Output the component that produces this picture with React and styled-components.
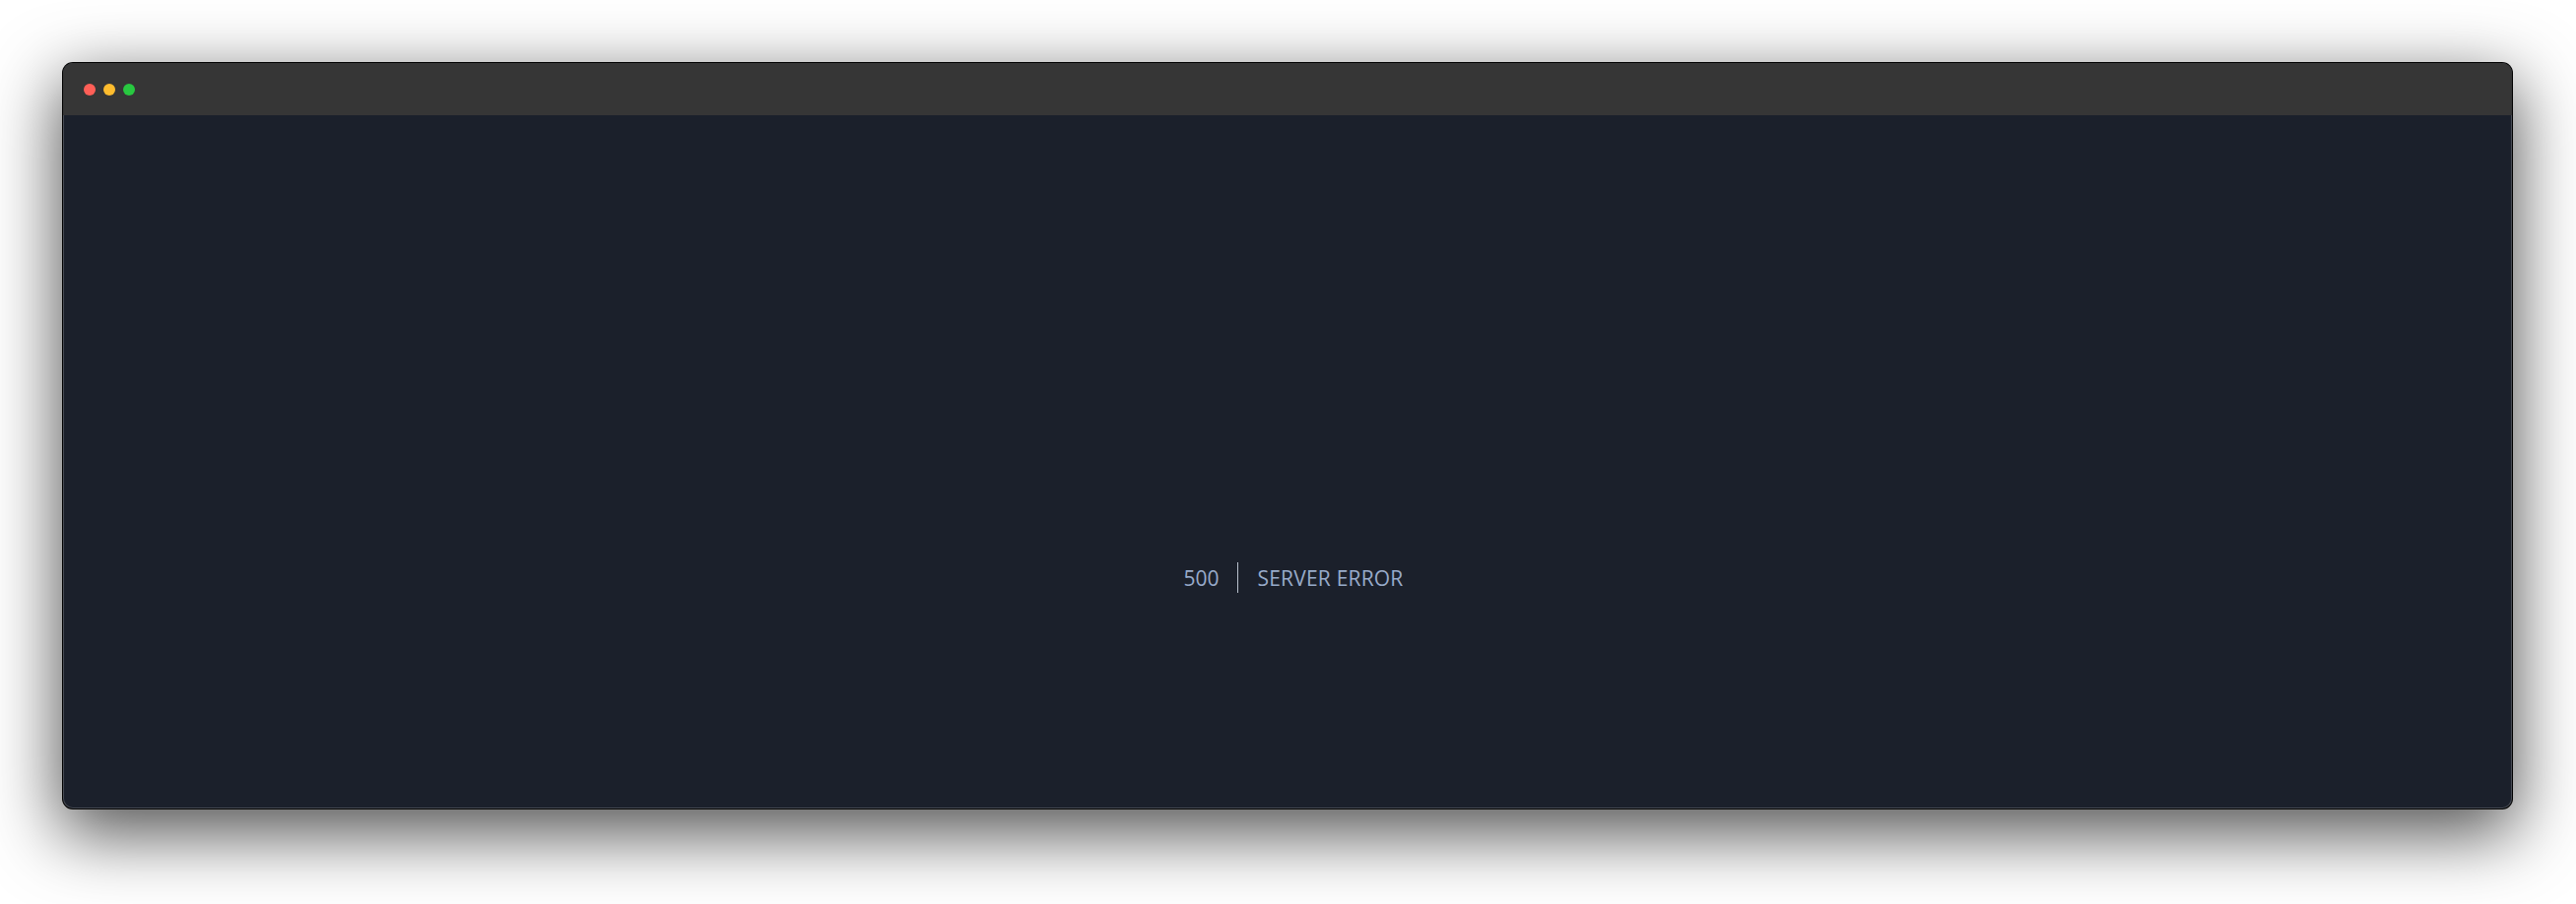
import React from "react";
import styled, { createGlobalStyle } from "styled-components";

const GlobalStyle = createGlobalStyle`
    html, body {
        margin: 0;
        padding: 0;
        background: #ffffff;
    }
`;

const Page = styled.div`
    width: 2615px;
    height: 918px;
    box-sizing: border-box;
    padding: 64px 65px 97px 64px;
    overflow: hidden;
`;

const Window = styled.div`
    height: 100%;
    display: flex;
    flex-direction: column;
    border-radius: 10px;
    overflow: hidden;
    background: #1b202b;
    box-shadow: 0 0 0 1px #000, inset 0 0 0 1px rgba(255, 255, 255, 0.2),
        0 22px 70px 4px rgba(0, 0, 0, 0.68);
`;

const TitleBar = styled.div`
    height: 53px;
    flex-shrink: 0;
    display: flex;
    align-items: center;
    gap: 8px;
    padding-left: 21px;
    background: #363636;
`;

const Dot = styled.span`
    width: 12px;
    height: 12px;
    border-radius: 50%;
    background: ${(p) => p.color};
`;

const Content = styled.div`
    flex: 1;
    display: flex;
    justify-content: center;
    align-items: flex-start;
    padding-top: 454px;
    padding-left: 12px;
    font-family: "Open Sans", "Liberation Sans", sans-serif;
    font-size: 21px;
    color: #98abca;
`;

const ErrorRow = styled.div`
    display: flex;
    align-items: center;
    height: 31px;
`;

const Code = styled.span`
    padding-right: 19px;
    height: 31px;
    display: flex;
    align-items: center;
    border-right: 1px solid #b8c0cc;
`;

const Message = styled.span`
    padding-left: 19px;
    letter-spacing: 0.2px;
`;

const App = () => {
    return (
        <>
            <GlobalStyle />
            <Page>
                <Window>
                    <TitleBar>
                        <Dot color="#ff5f57" />
                        <Dot color="#febc2e" />
                        <Dot color="#28c840" />
                    </TitleBar>
                    <Content>
                        <ErrorRow>
                            <Code>500</Code>
                            <Message>SERVER ERROR</Message>
                        </ErrorRow>
                    </Content>
                </Window>
            </Page>
        </>
    );
};

export default App;
